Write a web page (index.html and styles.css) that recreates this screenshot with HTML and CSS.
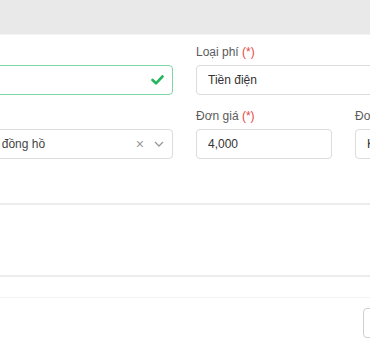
FILE: index.html
```html
<!DOCTYPE html>
<html lang="vi">

<head>
    <meta charset="UTF-8">
    <title>Thêm phí dịch vụ</title>
    <link rel="stylesheet" href="styles.css">
</head>

<body>
    <div class="modal">
        <div class="modal-header"></div>
        <div class="modal-body">
            <div class="form-grid">
                <div class="field">
                    <label class="field-label">Căn hộ <span class="req">(*)</span></label>
                    <div class="input input-valid">
                        <span class="input-text">A-1203</span>
                        <svg class="icon-check" width="13" height="10" viewBox="0 0 13 10">
                            <polyline points="1.5,5 5,8.3 11.5,1.5" fill="none" stroke="#27b55f" stroke-width="2.6" stroke-linecap="round" stroke-linejoin="round"/>
                        </svg>
                    </div>
                </div>
                <div class="field field-wide">
                    <label class="field-label">Loại phí <span class="req">(*)</span></label>
                    <div class="input"><span class="input-text">Tiền điện</span></div>
                </div>

                <div class="field">
                    <label class="field-label">Cách tính <span class="req">(*)</span></label>
                    <div class="input select">
                        <span class="input-text">Tính theo chỉ số đồng hồ</span>
                        <span class="select-clear">×</span>
                        <svg class="select-arrow" width="10" height="6" viewBox="0 0 10 6">
                            <polyline points="1,1 5,5 9,1" fill="none" stroke="#999" stroke-width="1.3"/>
                        </svg>
                    </div>
                </div>
                <div class="field">
                    <label class="field-label">Đơn giá <span class="req">(*)</span></label>
                    <div class="input"><span class="input-text">4,000</span></div>
                </div>
                <div class="field">
                    <label class="field-label">Đơn vị</label>
                    <div class="input"><span class="input-text">Kwh</span></div>
                </div>
            </div>

            <div class="note"></div>
        </div>
        <div class="modal-footer">
            <button class="btn">Đóng</button>
            <button class="btn">Lưu</button>
        </div>
    </div>
</body>

</html>
```

FILE: styles.css
```css
html,
body {
    margin: 0;
    padding: 0;
    background: #fff;
    overflow: hidden;
}

body {
    font-family: "Liberation Sans", Arial, sans-serif;
    font-size: 12px;
    color: #333;
}

.modal-header {
    height: 34px;
    background: #e9e9e9;
    border-bottom: 1px solid #f3f3f3;
}

.modal-body {
    padding-top: 8px;
}

.form-grid {
    display: grid;
    grid-template-columns: 272px 136px 136px;
    column-gap: 23px;
    row-gap: 12px;
    margin-left: -99px;
}

.field {
    display: flex;
    flex-direction: column;
}

.field-wide {
    grid-column: span 2;
}

.field-label {
    height: 18px;
    line-height: 18px;
    margin-bottom: 4px;
    color: #5a5a5a;
    white-space: nowrap;
}

.req {
    color: #e8473f;
}

.input {
    height: 30px;
    box-sizing: border-box;
    border: 1px solid #dcdcdc;
    border-radius: 4px;
    display: flex;
    align-items: center;
    padding: 0 11px;
    background: #fff;
}

.input-text {
    flex: 1;
    white-space: nowrap;
    color: #333;
}

.input-valid {
    border-color: #7fd6a2;
}

.icon-check {
    margin-right: -3px;
}

.select .input-text {
    color: #444;
}

.select-clear {
    color: #999;
    font-size: 14px;
    margin-right: 10px;
}

.select-arrow {
    margin-right: -3px;
}

.note {
    margin-top: 44px;
    height: 70px;
    border-top: 2px solid #ececec;
    border-bottom: 2px solid #ececec;
}

.modal-footer {
    margin-top: 20px;
    border-top: 1px solid #f3f3f3;
    padding: 10px 0 10px 363px;
    display: flex;
    gap: 8px;
    white-space: nowrap;
}

.btn {
    height: 30px;
    padding: 0 14px;
    border: 1px solid #cfcfcf;
    border-radius: 4px;
    background: #fff;
    font-family: inherit;
    font-size: 12px;
    color: #333;
    flex-shrink: 0;
}
```
